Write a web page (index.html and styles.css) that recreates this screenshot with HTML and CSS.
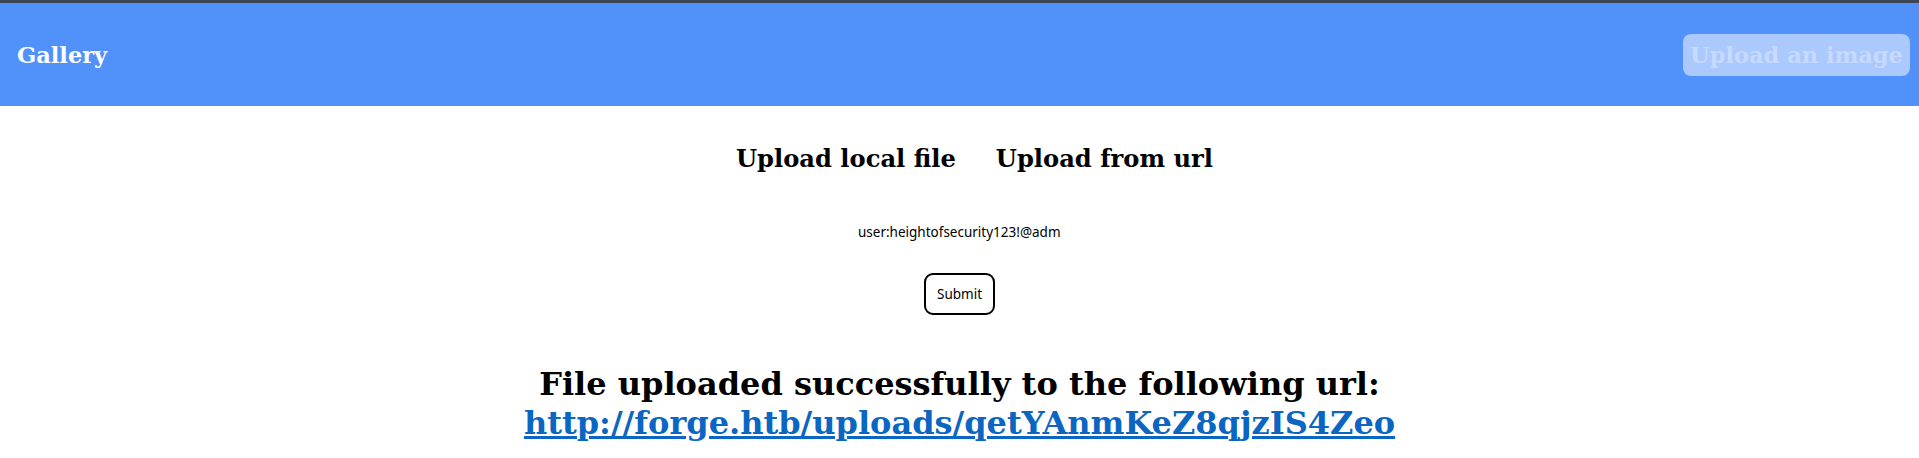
FILE: index.html
```html
<!DOCTYPE html>
<html>
<head>
<meta charset="utf-8">
<link rel="stylesheet" href="styles.css">
</head>
<body>
<nav class="navbar">
  <span class="brand">Gallery</span>
  <button class="upload-btn">Upload an image</button>
</nav>
<main class="content">
  <div class="tabs">
    <span class="tab">Upload local file</span>
    <span class="tab">Upload from url</span>
  </div>
  <form class="url-form">
    <input class="url-input" type="text" value="user:heightofsecurity123!@admin">
    <button class="submit-btn" type="button">Submit</button>
  </form>
  <h1 class="result">File uploaded successfully to the following url:<br><a class="result-link" href="#">http://forge.htb/uploads/qetYAnmKeZ8qjzIS4Zeo</a></h1>
</main>
</body>
</html>
```
FILE: styles.css
```css
html, body {
  margin: 0;
  padding: 0;
  background: #ffffff;
}
body {
  border-top: 3px solid #3b4657;
  font-family: "DejaVu Serif", serif;
}
.navbar {
  height: 103px;
  background: #5191fa;
  display: flex;
  align-items: center;
  justify-content: space-between;
  padding: 0 9px 0 17px;
}
.brand {
  color: #ffffff;
  font-weight: bold;
  font-size: 22.5px;
}
.upload-btn {
  width: 227px;
  height: 42px;
  border: none;
  border-radius: 8px;
  background: #abc9fc;
  color: #c6daff;
  font-family: "DejaVu Serif", serif;
  font-weight: bold;
  font-size: 22.5px;
  padding: 0;
}
.content {
  display: flex;
  flex-direction: column;
  align-items: center;
}
.tabs {
  display: flex;
  gap: 40px;
  margin-top: 38px;
  padding-left: 30px;
}
.tab {
  font-weight: bold;
  font-size: 24.2px;
  color: #000;
}
.url-form {
  display: flex;
  flex-direction: column;
  align-items: center;
  margin-top: 50px;
}
.url-input {
  border: none;
  outline: none;
  width: 203px;
  padding: 0;
  font-family: "Noto Sans", sans-serif;
  font-size: 13.5px;
  color: #000;
  background: transparent;
}
.submit-btn {
  margin-top: 32px;
  width: 71px;
  height: 42px;
  border: 2px solid #000;
  border-radius: 9px;
  background: #fff;
  font-family: "Noto Sans", sans-serif;
  font-size: 13.5px;
  color: #000;
  padding: 0;
}
.result {
  margin: 50px 0 0;
  text-align: center;
  font-size: 32px;
  line-height: 39px;
  font-weight: bold;
}
.result-link {
  color: #0a66c2;
}
```
